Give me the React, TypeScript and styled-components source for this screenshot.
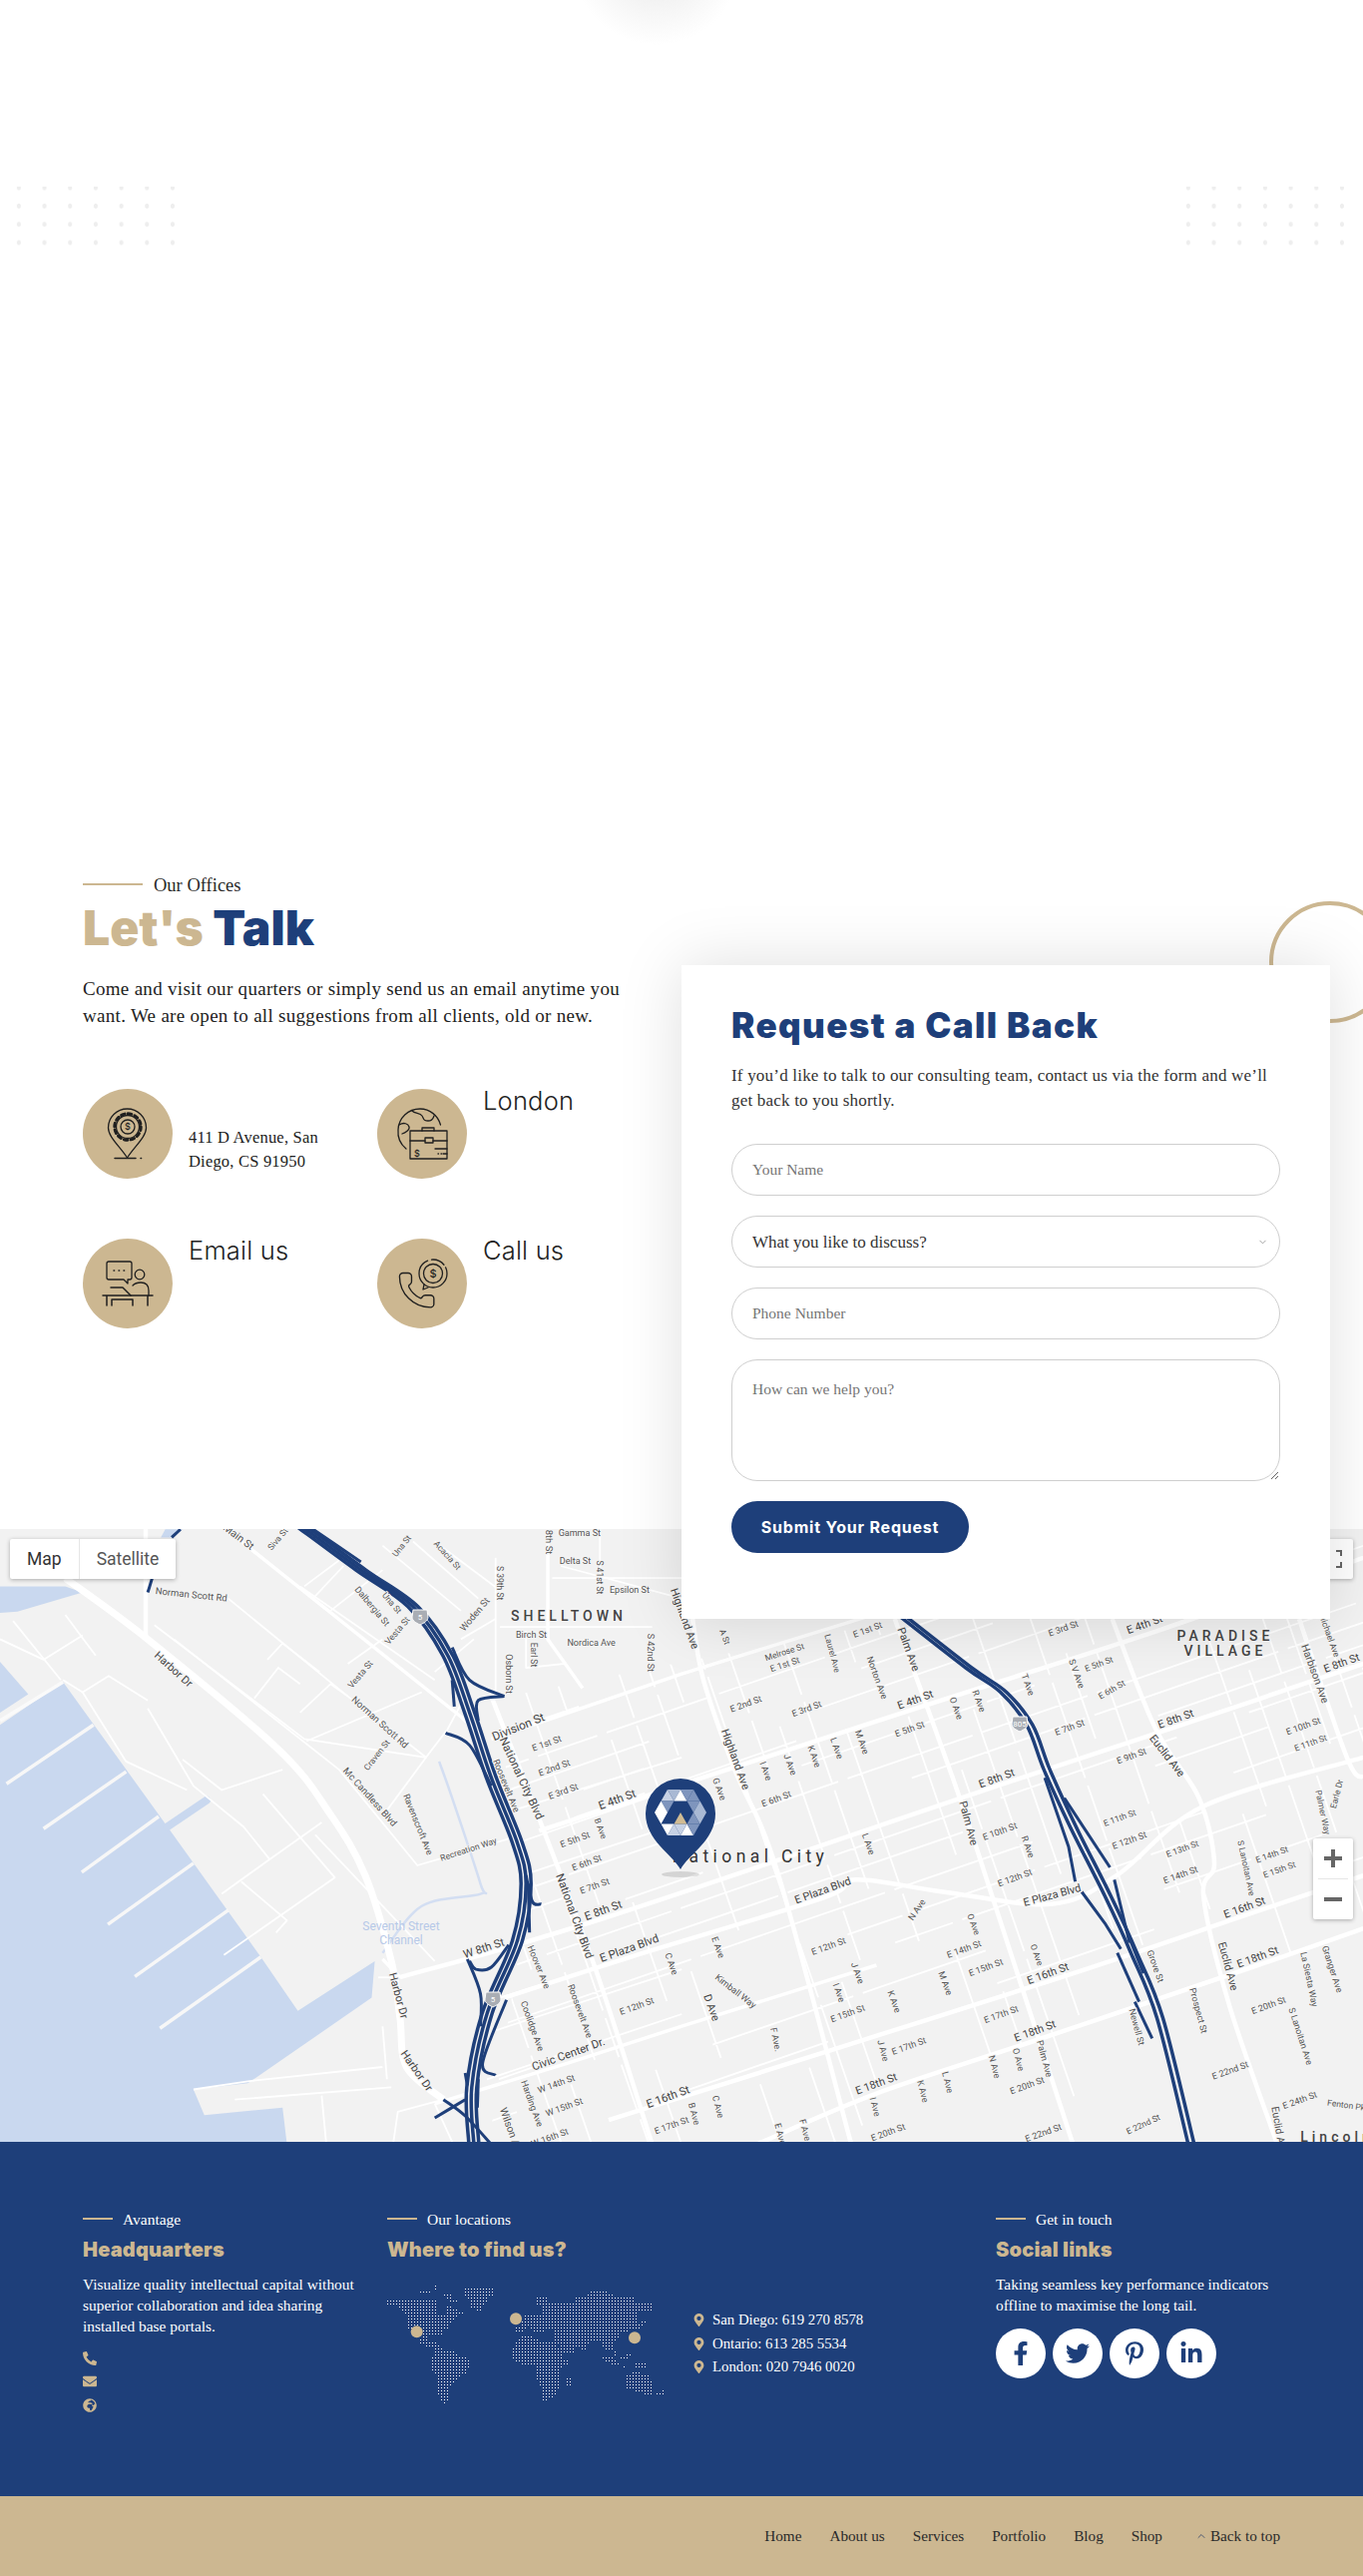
import React from 'react';
import styled, { createGlobalStyle } from 'styled-components';
import { FaFacebookF, FaTwitter, FaPinterestP, FaLinkedinIn, FaPhoneAlt, FaEnvelope, FaGlobeAfrica, FaMapMarkerAlt } from 'react-icons/fa';
import { LuChevronUp, LuChevronDown } from 'react-icons/lu';

const TAN = '#ccb791';
const NAVY = '#1e3f7a';
const SERIF = `"Liberation Serif", "Times New Roman", serif`;
const HEAD = `Inter, "Noto Sans", sans-serif`;

const Global = createGlobalStyle`
  html, body { margin: 0; padding: 0; background: #fff; }
  body { font-family: ${SERIF}; color: #2a2a2a; overflow-x: hidden; }
  * { box-sizing: border-box; }
`;

const Page = styled.div`width: 1366px; overflow: hidden; position: relative;`;

const Hero = styled.div`
  height: 867px; padding: 187px 8px 0 6px; display: flex; justify-content: space-between; align-items: flex-start; position: relative;
`;
const Glow = styled.div`
  position: absolute; left: 573px; top: -125px; width: 170px; height: 170px; border-radius: 50%;
  background: radial-gradient(circle closest-side, #f1f1f1 40%, #f8f8f8 70%, #ffffff 100%);
`;
const Dots = styled.div`
  width: 180px; height: 60px;
  background-image: radial-gradient(ellipse 2.2px 2.8px at center, #eeeeee 85%, transparent 100%);
  background-size: 25.7px 18.3px;
  background-position: 0 -8px;
`;

const Contact = styled.section`display: flex; height: 665px; position: relative;`;
const Ring = styled.div`
  position: absolute; left: 1272px; top: 36px; width: 122px; height: 122px; border-radius: 50%; border: 4px solid ${TAN};
`;
const Offices = styled.div`width: 683px; padding: 10px 0 0 83px;`;
const Eyebrow = styled.div<{ $line: number; $light?: boolean }>`
  display: flex; align-items: center; height: ${p => (p.$light ? 22 : 20)}px; font-size: ${p => (p.$light ? 15.5 : 18.5)}px;
  color: ${p => (p.$light ? '#fff' : '#2a2a2a')};
  &::before { content: ''; width: ${p => p.$line}px; height: 2px; background: ${TAN}; margin-right: ${p => (p.$light ? 10 : 11)}px; margin-top: -2px; }
`;
const BigTitle = styled.h2`
  margin: 8px 0 0; font: 900 48px/50px ${HEAD}; color: ${NAVY};
  span { color: ${TAN}; }
`;
const Lead = styled.p`margin: 22px 0 0; font-size: 19px; letter-spacing: 0.3px; line-height: 27px; width: 550px; color: #222;`;
const InfoGrid = styled.div`
  margin-top: 60px; display: grid; grid-template-columns: 295px 270px; grid-auto-rows: 90px; row-gap: 60px;
`;
const Info = styled.div`display: flex; gap: 16px;`;
const Badge = styled.div`width: 90px; height: 90px; flex: none; border-radius: 50%; background: ${TAN};
  svg { display: block; fill: none; stroke: #1f1f1f; stroke-width: 1.3; stroke-linecap: round; stroke-linejoin: round; }
  text { font: 500 9px Inter, sans-serif; fill: #1f1f1f; stroke: none; text-anchor: middle; }
`;
const InfoTitle = styled.div`font: 300 25.5px/24px ${HEAD}; letter-spacing: 0.2px; color: #222;`;
const Address = styled.div`margin-top: 37px; font-size: 16.5px; letter-spacing: 0.2px; line-height: 24px; width: 150px; color: #222;`;

const Card = styled.div`
  position: relative; z-index: 3; width: 650px; height: 655px; margin: 100px 0 -90px; padding: 40px 50px 0; background: #fff;
  box-shadow: 0 0 60px rgba(0,0,0,.13);
`;
const CardTitle = styled.h3`margin: 0; font: 900 35px/40px ${HEAD}; letter-spacing: 1.4px; color: ${NAVY};`;
const CardText = styled.p`margin: 19px 0 0; font-size: 17px; letter-spacing: 0.2px; line-height: 24.5px; color: #333; width: 545px;`;
const Form = styled.form`margin-top: 31px; display: flex; flex-direction: column; gap: 20px; align-items: flex-start;`;
const fieldCss = `
  width: 550px; border: 1px solid #cfcfcf; background: #fff; font-family: ${SERIF}; font-size: 15.5px; outline: none;
  padding: 0 20px; color: #333;
  &::placeholder { color: #757575; opacity: 1; }
`;
const Input = styled.input`${fieldCss} height: 52px; border-radius: 26px;`;
const SelectWrap = styled.div`position: relative; width: 550px; height: 52px;
  svg { position: absolute; right: 12px; top: 21px; color: #9a9a9a; pointer-events: none; }
`;
const Select = styled.select`${fieldCss} font-size: 17px; height: 52px; border-radius: 26px; appearance: none; -webkit-appearance: none;`;
const TextArea = styled.textarea`${fieldCss} height: 122px; border-radius: 26px; padding-top: 20px; display: block;`;
const Submit = styled.button`
  width: 238px; height: 52px; border: 0; border-radius: 26px; background: ${NAVY}; color: #fff; font: 700 16px ${HEAD}; letter-spacing: 0.8px;
`;

const MapWrap = styled.div`position: relative; height: 614px; background: #f2f2f2; overflow: hidden; z-index: 1;
  > svg.base { display: block; }
`;
const MapTabs = styled.div`position: absolute; left: 10px; top: 10px; height: 40px; display: flex; background: #fff; border-radius: 2px; box-shadow: 0 1px 4px rgba(0,0,0,.3);`;
const MapTab = styled.div<{ $on?: boolean }>`
  font: 400 17.5px/40px Roboto, sans-serif; padding: 0 17px; color: ${p => (p.$on ? '#333' : '#565656')};
  & + & { border-left: 1px solid #e6e6e6; }
`;
const MapButton = styled.div`position: absolute; right: 10px; top: 10px; width: 40px; height: 40px; background: #fff; border-radius: 2px; box-shadow: 0 1px 4px rgba(0,0,0,.3); display: flex; align-items: center; justify-content: center;`;
const Zoom = styled.div`position: absolute; right: 10px; top: 310px; width: 40px; height: 81px; background: #fff; border-radius: 2px; box-shadow: 0 1px 4px rgba(0,0,0,.3);
  display: flex; flex-direction: column; align-items: center; justify-content: space-between; padding: 0 0;
`;
const ZoomBtn = styled.div`height: 40px; width: 100%; display: flex; align-items: center; justify-content: center; font: 0/0 a;`;
const ZoomSep = styled.div`width: 30px; height: 1px; background: #e6e6e6;`;
const Pin = styled.div`position: absolute; left: 647px; top: 250px; width: 70px; height: 100px;`;

const Footer = styled.footer`
  position: relative; z-index: 1; height: 355px; background: ${NAVY}; padding: 67px 0 0 83px; display: flex; color: #fff;
`;
const FCol = styled.div<{ $w: number }>`width: ${p => p.$w}px; flex: none;`;
const FTitle = styled.h4`margin: 7px 0 0; font: 900 20px/24px ${HEAD}; letter-spacing: 0.2px; color: ${TAN};`;
const FText = styled.p`margin: 12px 0 0; font-size: 15.4px; line-height: 21px; color: #fff; width: 285px;`;
const ContactIcons = styled.div`margin-top: 10px; display: flex; flex-direction: column; color: ${TAN}; font-size: 14px;
  span { height: 23.5px; display: flex; align-items: center; }
`;
const FindRow = styled.div`display: flex; margin-top: 24px;`;
const Places = styled.ul`list-style: none; margin: 23px 0 0 27px; padding: 0;`;
const Place = styled.li`display: flex; align-items: center; height: 23.5px; font-size: 14.8px; gap: 8px;
  svg { color: ${TAN}; font-size: 13px; width: 11px; }
`;
const Socials = styled.div`display: flex; gap: 7px; margin-top: 13px;`;
const Social = styled.a`width: 50px; height: 50px; border-radius: 50%; background: #fff; color: ${NAVY}; display: flex; align-items: center; justify-content: center; font-size: 24px;`;

const Bar = styled.nav`
  height: 80px; background: ${TAN}; display: flex; justify-content: flex-end; align-items: center; padding-right: 83px; position: relative; z-index: 1;
`;
const BarLink = styled.a<{ $gap?: number }>`
  font-size: 15.2px; color: #2a2a2a; margin-left: ${p => p.$gap ?? 28}px; display: flex; align-items: center; gap: 3px;
  svg { color: #4e5a73; }
`;

/* ---------- drawings ---------- */
const RingTeeth = () => <circle cx="45" cy="38" r="13.2" strokeWidth="3" strokeDasharray="3.6 3.3" />;
const IconPin = () => (
  <svg width="90" height="90" viewBox="0 0 90 90">
    <path d="M44.5 20a19 19 0 0 1 19 19c0 9-11 18-19 30c-8-12-19-21-19-30a19 19 0 0 1 19-19z" />
    <RingTeeth />
    <circle cx="45" cy="38" r="11.5" />
    <circle cx="45" cy="38" r="7" />
    <text x="45" y="41.3">$</text>
    <path d="M32 69.5H53M58 69.5h.6" strokeWidth="1.5" />
  </svg>
);
const IconGlobe = () => (
  <svg width="90" height="90" viewBox="0 0 90 90">
    <path d="M29 60a22 22 0 0 1-8-19c.5-12 10-21 22-21c10 0 18 7 20.500 16" />
    <path d="M35 22c3 3 8 2 10 5s1 5 6 5s5-3 6-5" />
    <path d="M22 36c5-3 9-1 10 2s-4 6-7 7" />
    <rect x="33" y="42" width="37" height="28" />
    <path d="M45 42v-3h12v3M33 52h15M56 52h14" />
    <rect x="48" y="49" width="8" height="5" />
    <path d="M58 60H70M61 65h.5M64 65h.5M66 65h4" />
    <text x="40" y="68">$</text>
  </svg>
);
const IconDesk = () => (
  <svg width="90" height="90" viewBox="0 0 90 90">
    <path d="M26 23h21a2 2 0 0 1 2 2v14a2 2 0 0 1-2 2h-2v4l-4-4H26a2 2 0 0 1-2-2V25a2 2 0 0 1 2-2z" />
    <path d="M31 32h.6M36 32h.6M41 32h.6" strokeWidth="1.5" />
    <circle cx="57" cy="36" r="4.800" />
    <path d="M50 47c2-2 4-3 8-3c5 0 8 3 8 8v5" />
    <path d="M28 49h12l8 8" strokeWidth="1.5" />
    <path d="M20 57H70M24 57v10M65 57v10M29 67v-6h21v6" strokeWidth="1.5" />
  </svg>
);
const IconCall = () => (
  <svg width="90" height="90" viewBox="0 0 90 90">
    <circle cx="56" cy="35" r="14" strokeDasharray="60 4 14 3" />
    <circle cx="56" cy="35" r="9.500" />
    <text x="56" y="38.500" style={{ fontSize: 11 }}>$</text>
    <path d="M47 46l-1 5l5-2" />
    <g transform="translate(19,31) scale(1.72)" strokeWidth=".8">
      <path d="M13.832 16.568a1 1 0 0 0 1.213-.303l.355-.465A2 2 0 0 1 17 15h3a2 2 0 0 1 2 2v3a2 2 0 0 1-2 2A18 18 0 0 1 2 4a2 2 0 0 1 2-2h3a2 2 0 0 1 2 2v3a2 2 0 0 1-.8 1.6l-.468.351a1 1 0 0 0-.292 1.233 14 14 0 0 0 6.392 6.384" />
    </g>
  </svg>
);

/* map: coordinates were read off a 2.295 x 2.45 enlargement */
type P = [number, number];
const mx = (x: number) => x / 2.295;
const my = (y: number) => y / 2.45 - 12;
const line = (pts: P[], off = 0) => 'M' + pts.map(([x, y]) => `${mx(x + off).toFixed(1)} ${my(y).toFixed(1)}`).join('L');
const smooth = (pts: P[], dx = 0, dy = 0) => {
  const p = pts.map(([x, y]) => [mx(x) + dx, my(y) + dy]);
  let d = `M${p[0][0].toFixed(1)} ${p[0][1].toFixed(1)}`;
  for (let i = 0; i < p.length - 1; i++) {
    const a = p[Math.max(0, i - 1)], b = p[i], c = p[i + 1], e = p[Math.min(p.length - 1, i + 2)];
    d += `C${(b[0] + (c[0] - a[0]) / 6).toFixed(1)} ${(b[1] + (c[1] - a[1]) / 6).toFixed(1)} ${(c[0] - (e[0] - b[0]) / 6).toFixed(1)} ${(c[1] - (e[1] - b[1]) / 6).toFixed(1)} ${c[0].toFixed(1)} ${c[1].toFixed(1)}`;
  }
  return d;
};

const WATER: P[][] = [
  [[0, 510], [145, 405], [385, 760], [600, 1080], [685, 1212], [862, 1090], [855, 1180], [570, 1390], [445, 1405], [470, 1468], [650, 1450], [660, 1540], [0, 1540]],
  [[0, 355], [65, 435], [0, 480]],
  [[0, 170], [150, 170], [190, 185], [40, 232], [0, 235]],
  [[380, 30], [420, 30], [400, 50], [370, 50]],
];
const PIERS: P[][] = [
  [[15, 655], [215, 510]], [[100, 765], [290, 625]], [[188, 872], [365, 735]], [[248, 1000], [445, 850]], [[310, 1128], [525, 965]], [[368, 1255], [600, 1080]], [[0, 500], [145, 405]],
];
const BIG: P[][] = [
  [[150, 150], [340, 300], [640, 570], [760, 730], [840, 880], [900, 1090], [920, 1230], [935, 1350], [1020, 1430]],
  [[335, 30], [335, 300]],
  [[1240, 770], [2106, 470], [2660, 280], [3136, 100]],
  [[920, 1130], [1388, 985], [2293, 660], [2705, 515], [3136, 360]],
  [[1160, 1180], [1450, 1080], [1893, 935], [1968, 890], [2168, 920], [2418, 950], [2568, 880], [2768, 710], [3136, 590]],
  [[1400, 1480], [2411, 1140], [2863, 978], [3136, 880]],
  [[1740, 1540], [2016, 1415], [2381, 1285], [2893, 1100], [3136, 1010]],
  [[1130, 440], [1240, 740], [1370, 1110], [1500, 1540]],
  [[1593, 250], [1618, 400], [1690, 620], [1788, 870], [1958, 1540]],
  [[2058, 250], [2198, 660], [2288, 950], [2468, 1540]],
  [[2558, 250], [2658, 520], [2758, 690], [2793, 850], [2768, 930], [2828, 1200], [2938, 1540]],
  [[2988, 250], [3098, 590], [3136, 640]],
];
const MID: P[][] = [
  [[520, 30], [1060, 490], [1110, 540]],
  [[1130, 545], [1568, 385], [2068, 220]],
  [[1000, 1440], [1308, 1340], [1568, 1250], [2016, 1100]],
  [[1260, 30], [1260, 300], [1340, 420]],
  [[880, 1085], [920, 1130]],
];
const THIN: P[][] = [
  [[30, 255], [140, 400]], [[150, 240], [220, 340]], [[0, 300], [100, 350], [190, 290]], [[190, 430], [250, 390], [340, 450]],
  [[145, 400], [190, 430], [290, 600], [430, 670]], [[340, 470], [445, 660], [560, 760], [620, 840], [510, 925]],
  [[420, 595], [510, 670], [650, 620]], [[620, 840], [740, 750]], [[555, 895], [660, 990], [635, 1020]],
  [[605, 680], [770, 885], [515, 1075]], [[725, 780], [1000, 1090]], [[355, 265], [700, 545], [980, 590]],
  [[525, 200], [800, 440], [980, 590], [1030, 520], [1070, 440]], [[400, 300], [780, 620], [960, 855], [1170, 790]],
  [[615, 350], [650, 310], [735, 380]], [[585, 445], [640, 370], [690, 410]], [[690, 480], [760, 410], [800, 440]],
  [[705, 550], [970, 430]], [[980, 590], [890, 720]], [[700, 170], [800, 90], [830, 130]], [[720, 200], [790, 120]],
  [[760, 230], [880, 130]], [[690, 170], [1000, 400]], [[800, 360], [880, 300]], [[1140, 100], [1140, 430]], [[1380, 30], [1380, 190]],
  [[1150, 270], [1500, 270]], [[1290, 120], [1568, 200]], [[1000, 60], [1150, 180]], [[950, 60], [1100, 200]], [[880, 70], [1060, 230]],
  [[1270, 150], [1568, 150]], [[1210, 280], [1210, 370], [1300, 360]], [[1060, 300], [1140, 250]], [[1000, 380], [1090, 300]],
  [[540, 1430], [900, 1400]], [[905, 1534], [915, 1460], [1020, 1430]], [[740, 1420], [750, 1534]], [[870, 1130], [930, 1130]],
  [[445, 1405], [570, 1385], [880, 1350]], [[880, 1250], [890, 1380]],
  [[1000, 1440], [1040, 1534]], [[1150, 1180], [1568, 1040]], [[1140, 1260], [1568, 1110]], [[1120, 1380], [1568, 1220]],
  [[1180, 720], [1568, 590]], [[1190, 800], [1568, 660]], [[1200, 880], [1568, 750]],
];
const VEIN: P[] = [[1010, 600], [1040, 690], [1105, 900], [1105, 925], [970, 955], [880, 1070]];

const I5: P[] = [[690, 20], [830, 130], [950, 220], [1030, 340], [1080, 480], [1130, 640], [1190, 800], [1210, 900], [1190, 1040], [1120, 1220], [1085, 1400], [1090, 1540]];
const I5R: P[][] = [
  [[1040, 320], [1080, 400], [1160, 440]], [[1100, 500], [1100, 450], [1160, 440]], [[1040, 400], [1045, 465]],
  [[1025, 530], [1080, 560], [1130, 660]], [[1210, 880], [1225, 945], [1245, 950]], [[1215, 900], [1218, 1020]],
  [[1075, 1085], [1105, 1170], [1105, 1250]], [[1080, 1090], [1095, 1110], [1130, 1105], [1170, 1050]],
  [[1165, 1185], [1110, 1340], [1140, 1370]], [[1020, 1430], [1070, 1470], [1130, 1540]], [[1000, 1475], [1070, 1430]],
  [[1100, 1380], [1098, 1450]], [[1070, 1365], [1075, 1395]], [[720, 30], [830, 110]],
  [[340, 185], [350, 150]], [[395, 50], [415, 30]],
];
const I805: P[] = [[2060, 230], [2228, 370], [2308, 430], [2368, 510], [2408, 620], [2468, 760], [2548, 930], [2608, 1070], [2668, 1230], [2740, 1540]];
const I805R: P[][] = [
  [[2403, 640], [2458, 810], [2473, 895]], [[2448, 690], [2553, 860]], [[2488, 920], [2543, 1000], [2578, 1060]], [[2563, 890], [2598, 1045]],
  [[2600, 1040], [2630, 1120]], [[2570, 1070], [2620, 1190]], [[2610, 1190], [2650, 1280]],
];

type L = [string, number, number, number, number, number?];
const LABELS: L[] = [
  ['Main St', 548, 50, 37, 11], ['Siva St', 640, 55, -50, 9], ['Una St', 925, 72, -52, 9], ['Acacia St', 1028, 95, 48, 9],
  ['S 38th St', 1262, 45, 90, 10], ['Gamma St', 1333, 40, 0, 9.500], ['Delta St', 1323, 110, 0, 9.500], ['S 41st St', 1378, 148, 90, 9],
  ['S 39th St', 1148, 162, 90, 9], ['Epsilon St', 1448, 180, 0, 9.500], ['Norman Scott Rd', 440, 192, 6, 10], ['Dalbergia St', 855, 220, 50, 9.500],
  ['Una St', 900, 212, 50, 9], ['Vesta St', 915, 280, -50, 9.500], ['Woden St', 1093, 240, -50, 10], ['Birch St', 1222, 290, 0, 9.500],
  ['Earl St', 1225, 338, 90, 9], ['Nordica Ave', 1360, 311, 0, 9.500], ['S 42nd St', 1495, 333, 90, 9.500], ['Osborn St', 1168, 385, 90, 9.500],
  ['Harbor Dr', 398, 375, 42, 11.500], ['Vesta St', 830, 387, -50, 9.500], ['Norman Scott Rd', 873, 505, 42, 10], ['Division St', 1193, 517, -22, 12.500],
  ['E 1st St', 1258, 557, -20, 9.500], ['E 2nd St', 1275, 617, -20, 9.500], ['E 3rd St', 1296, 675, -20, 9.500], ['National City Blvd', 1198, 642, 65, 12],
  ['Roosevelt Ave', 1163, 660, 68, 9.500], ['Craven St', 868, 585, -52, 9], ['Mc Candless Blvd', 850, 688, 48, 10], ['Ravenscroft Ave', 960, 755, 68, 9.500],
  ['Recreation Way', 1078, 817, -18, 9], ['E 4th St', 1420, 695, -20, 12], ['B Ave', 1380, 765, 70, 9], ['E 5th St', 1323, 793, -20, 9.500],
  ['E 6th St', 1350, 850, -20, 9.500], ['E 7th St', 1368, 907, -20, 9.500], ['E 8th St', 1388, 967, -20, 12], ['National City Blvd', 1320, 980, 70, 12],
  ['W 8th St', 1113, 1060, -18, 12], ['Hoover Ave', 1238, 1105, 68, 9.500], ['E Plaza Blvd', 1448, 1060, -20, 12], ['C Ave', 1543, 1097, 70, 9.500],
  ['Harbor Dr', 915, 1175, 75, 11.500], ['Roosevelt Ave', 1333, 1213, 70, 9.500], ['Coolidge Ave', 1223, 1250, 70, 9.500], ['E 12th St', 1465, 1202, -20, 9.500],
  ['Civic Center Dr.', 1308, 1320, -20, 12], ['Harbor Dr', 957, 1360, 55, 11.500], ['W 14th St', 1280, 1393, -20, 9.500], ['Harding Ave', 1222, 1440, 70, 9.500],
  ['W 15th St', 1298, 1450, -20, 9.500], ['Wilson Ave', 1175, 1510, 70, 11], ['W 16th St', 1265, 1525, -20, 9.500], ['E 16th St', 1537, 1425, -20, 12], ['E 17th St', 1545, 1495, -20, 9.500],
];
const LABELS4: L[] = [
  ['Highland Ave', 5, 250, 70, 11.500], ['A St', 98, 295, 70, 9], ['Melrose St', 237, 333, -18, 9], ['E 1st St', 238, 363, -18, 9.500], ['E 1st St', 428, 278, -20, 9.500],
  ['Laurel Ave', 345, 335, 75, 9], ['Norton Ave', 448, 395, 70, 9.500], ['Palm Ave', 520, 325, 70, 11.500], ['E 3rd St', 878, 275, -20, 9.500], ['E 4th St', 1065, 265, -20, 11.500],
  ['Harbison Ave', 1455, 385, 70, 11], ['Michael Ave', 1488, 290, 70, 9], ['E 8th St', 1518, 360, -20, 11.500], ['E 2nd St', 148, 460, -20, 9.500], ['E 3rd St', 288, 472, -20, 9.500],
  ['E 4th St', 538, 450, -20, 11.500], ['E 5th St', 525, 522, -20, 9.500], ['R Ave', 682, 452, 70, 9.500], ['O Ave', 630, 470, 70, 9.500], ['T Ave', 795, 412, 70, 9.500],
  ['S V Ave', 907, 385, 70, 9.500], ['E 5th St', 960, 362, -20, 9], ['E 6th St', 990, 425, -30, 9], ['E 7th St', 893, 518, -20, 9.500], ['E 8th St', 1137, 497, -20, 11.500],
  ['Euclid Ave', 1115, 587, 52, 11.500], ['E 9th St', 1035, 588, -20, 9.500], ['E 10th St', 1430, 515, -20, 9.500], ['E 11th St', 1447, 556, -20, 9], ['Highland Ave', 122, 595, 70, 11.500],
  ['M Ave', 413, 553, 70, 9.500], ['L Ave', 355, 568, 70, 9.500], ['K Ave', 303, 588, 70, 9.500], ['J Ave', 248, 608, 70, 9.500], ['I Ave', 192, 624, 70, 9.500], ['G Ave', 85, 668, 70, 9.500],
  ['E 6th St', 218, 693, -20, 9.500], ['E 8th St', 725, 643, -20, 11.500], ['Palm Ave', 658, 752, 75, 11.500], ['E 10th St', 732, 773, -20, 9.500], ['R Ave', 795, 810, 70, 9.500], ['L Ave', 428, 803, 70, 9.500],
  ['E 11th St', 1008, 740, -20, 9], ['E 12th St', 1030, 795, -20, 9.500], ['E 13th St', 1152, 816, -20, 9], ['E 14th St', 1148, 880, -20, 9.500], ['E 14th St', 1358, 830, -20, 9], ['E 15th St', 1375, 867, -20, 9],
  ['S Lanoitan Ave', 1297, 862, 78, 9], ['Palmer Way', 1473, 725, 78, 9], ['Earle Dr', 1508, 680, -75, 9], ['E Plaza Blvd', 325, 918, -20, 11.500], ['E Plaza Blvd', 852, 930, -15, 11.500], ['E 12th St', 767, 887, -20, 9.500],
  ['N Ave', 542, 965, -55, 9.500], ['O Ave', 670, 1000, 70, 9], ['E Ave', 82, 1057, 70, 9.500], ['E 12th St', 338, 1055, -20, 9.500], ['E 14th St', 650, 1062, -20, 9.500], ['E 15th St', 700, 1107, -20, 9.500],
  ['O Ave', 815, 1075, 70, 9], ['E 16th St', 843, 1122, -20, 11.500], ['E 16th St', 1295, 960, -20, 11.500], ['Grove St', 1088, 1103, 70, 9.500], ['Euclid Ave', 1255, 1103, 75, 11.500], ['E 18th St', 1325, 1082, -20, 11.500],
  ['Granger Ave', 1495, 1110, 72, 9.500], ['La Siesta Way', 1442, 1135, 78, 9.500], ['J Ave', 403, 1120, 70, 9.500], ['I Ave', 360, 1168, 70, 9.500], ['M Ave', 605, 1145, 70, 9.500], ['K Ave', 487, 1190, 70, 9.500],
  ['Kimball Way', 123, 1165, 38, 9.500], ['D Ave', 67, 1205, 70, 11.500], ['E 15th St', 382, 1220, -20, 9.500], ['E 17th St', 735, 1222, -20, 9.500], ['E 20th St', 1350, 1200, -20, 9.500], ['S Lanoitan Ave', 1422, 1275, 72, 9.500],
  ['Prospect St', 1187, 1212, 75, 9.500], ['Newell St', 1045, 1252, 75, 9.500], ['F Ave.', 215, 1283, 78, 9.500], ['E 18th St', 813, 1263, -20, 11.500], ['Palm Ave', 833, 1330, 75, 9.500], ['J Ave', 462, 1310, 75, 9.500],
  ['E 17th St', 523, 1300, -20, 9.500], ['L Ave', 610, 1388, 75, 9.500], ['N Ave', 718, 1350, 75, 9.500], ['O Ave', 773, 1332, 75, 9.500], ['E 20th St', 795, 1397, -20, 9.500], ['E 18th St', 448, 1393, -20, 11.500],
  ['K Ave', 553, 1410, 75, 9.500], ['E 22nd St', 1262, 1360, -20, 9.500], ['E 24th St', 1422, 1433, -20, 9.500], ['Fenton Pkwy', 1540, 1447, 8, 9], ['C Ave', 82, 1448, 75, 9.500], ['B Ave', 27, 1465, 75, 9.500],
  ['I Ave', 443, 1448, 75, 9.500], ['F Ave', 282, 1505, 75, 9.500], ['E Ave', 225, 1515, 75, 9.500], ['E 20th St', 475, 1512, -20, 9.500], ['E 22nd St', 832, 1513, -20, 9.500], ['E 22nd St', 1062, 1492, -25, 9], ['Euclid Ave', 1372, 1505, 80, 11],
];

const minorStreets = () => {
  let s = 7;
  const r = () => (s = (s * 16807) % 2147483647) / 2147483647;
  const a = (-19 * Math.PI) / 180;
  const e1: P = [Math.cos(a), Math.sin(a)];
  const e2: P = [-Math.sin(a), Math.cos(a)];
  const O: P = [500, 520];
  let d = '';
  const seg = (u0: number, v0: number, u1: number, v1: number) => {
    const f = (u: number, v: number) => `${(O[0] + u * e1[0] + v * e2[0]).toFixed(1)} ${(O[1] + u * e1[1] + v * e2[1]).toFixed(1)}`;
    d += `M${f(u0, v0)}L${f(u1, v1)}`;
  };
  for (let u = -60; u < 960; u += 22 + r() * 12) {
    for (let v = -640; v < 120;) {
      const len = 40 + r() * 130;
      if (r() < 0.62) seg(u, v, u, v + len);
      v += len + 8;
    }
  }
  for (let v = -640; v < 120; v += 20 + r() * 18) {
    for (let u = -60; u < 960;) {
      const len = 50 + r() * 160;
      if (r() < 0.62) seg(u, v, u + len, v);
      u += len + 10;
    }
  }
  return d;
};

const Shield = ({ x, y, t }: { x: number; y: number; t: string }) => (
  <g transform={`translate(${x},${y})`}>
    <path d="M-7-7h14l1 7c0 4-4 6-8 8c-4-2-8-4-8-8z" fill="#a9adb4" stroke="#fff" strokeWidth="1" />
    <text x="0" y="2.500" textAnchor="middle" fontFamily="Roboto, sans-serif" fontSize="8" fill="#fff">{t}</text>
  </g>
);

const MapLabel = ({ l, off }: { l: L; off: number }) => (
  <text
    transform={`translate(${mx(l[1] + off).toFixed(1)},${my(l[2]).toFixed(1)}) rotate(${l[3]})`}
    textAnchor="middle" dominantBaseline="middle" fontFamily="Roboto, sans-serif" fontSize={l[4] * 0.95}
    fill={l[4] > 11 ? '#444' : '#555'} stroke="#f4f4f4" strokeWidth="2" paintOrder="stroke"
  >{l[0]}</text>
);
const Area = ({ x, y, t }: { x: number; y: number; t: string }) => (
  <text x={x} y={y} textAnchor="middle" fontFamily="Roboto, sans-serif" fontWeight="500" fontSize="14" letterSpacing="4" fill="#444" stroke="#f4f4f4" strokeWidth="2" paintOrder="stroke">{t}</text>
);

const CityMap = () => {
  const minor = React.useMemo(minorStreets, []);
  return (
    <svg className="base" width="1366" height="614" viewBox="0 0 1366 614">
      <defs>
        <clipPath id="grid-land"><path d="M497 170L1366 0V614H490L527 380z" /></clipPath>
      </defs>
      <rect width="1366" height="614" fill="#f2f2f2" />
      {WATER.map((w, i) => <path key={i} d={line(w) + 'Z'} fill="#c9d8ef" />)}
      <path d={line([[385, 760], [475, 695]])} stroke="#c9d8ef" strokeWidth="8" strokeLinecap="round" fill="none" />
      <path d={smooth(VEIN)} stroke="#d3def2" strokeWidth="2.500" fill="none" />
      <g fill="none" stroke="#fff" strokeLinecap="butt" strokeLinejoin="round">
        {PIERS.map((p, i) => <path key={i} d={line(p)} strokeWidth="3.500" stroke={i === 6 ? '#fafafa' : '#f7f7f7'} />)}
        <path d={minor} clipPath="url(#grid-land)" strokeWidth="1.800" />
        {THIN.map((p, i) => <path key={i} d={line(p)} strokeWidth="1.800" />)}
        {MID.map((p, i) => <path key={i} d={line(p)} strokeWidth="3.500" />)}
        {BIG.map((p, i) => <path key={i} d={smooth(p)} strokeWidth={i === 0 ? 7 : 4.500} />)}
      </g>
      <g fill="none" stroke="#1e3f7a" strokeLinejoin="round">
        <path d={smooth(I5, -5, 0)} strokeWidth="3.500" />
        <path d={smooth(I5, 0, 0)} strokeWidth="3.500" />
        <path d={smooth(I5, 5, 0)} strokeWidth="3.500" />
        {I5R.map((p, i) => <path key={i} d={smooth(p)} strokeWidth="3" />)}
        <path d={smooth(I805, -3, 0)} strokeWidth="3.500" />
        <path d={smooth(I805, 3, 0)} strokeWidth="3.500" />
        {I805R.map((p, i) => <path key={i} d={line(p, 0)} strokeWidth="3" />)}
      </g>
      <Shield x={421} y={88} t="5" />
      <Shield x={494} y={471} t="5" />
      <Shield x={1022} y={195} t="805" />
      <g>
        {LABELS.map((l, i) => <MapLabel key={i} l={l} off={0} />)}
        {LABELS4.map((l, i) => <MapLabel key={i} l={l} off={1568} />)}
      </g>
      <g fontFamily="Roboto, sans-serif" fontSize="12" fill="#b7c9e8" textAnchor="middle">
        <text x="402" y="402">Seventh Street</text>
        <text x="402" y="416">Channel</text>
      </g>
      <Area x={570} y={92} t="SHELLTOWN" />
      <Area x={1228} y={112} t="PARADISE" />
      <Area x={1228} y={127} t="VILLAGE" />
      <Area x={1340} y={614} t="Lincoln" />
      <text x="752" y="334" textAnchor="middle" fontFamily="Roboto, sans-serif" fontSize="17.500" letterSpacing="4.400" fill="#333" stroke="#f4f4f4" strokeWidth="2" paintOrder="stroke">National City</text>
    </svg>
  );
};

const tri = (c: string, ...p: number[]) => ({ c, pts: p.map((v, i) => (i % 2 ? v * 11.5 - 23 + 34 : v * 6.5 + 35)).join(' ') });
const W = '#ffffff', Lt = '#c6d1e4', Md = '#7f95bd', Sf = '#a9b9d4';
const LOGO = [
  tri(Lt, -2, 0, -3, 1, -1, 1), tri(Sf, -2, 0, 0, 0, -1, 1), tri(W, 0, 0, -1, 1, 1, 1), tri(Md, 0, 0, 2, 0, 1, 1), tri(Md, 2, 0, 1, 1, 3, 1),
  tri(Md, -3, 1, -1, 1, -2, 2), tri(W, -3, 1, -4, 2, -2, 2), tri(Md, 1, 1, 3, 1, 2, 2), tri(Sf, 3, 1, 2, 2, 4, 2),
  tri(W, -4, 2, -2, 2, -3, 3), tri(Sf, 2, 2, 4, 2, 3, 3), tri(Md, 2, 2, 1, 3, 3, 3),
  tri(W, -3, 3, -1, 3, -2, 4), tri(Lt, -1, 3, -2, 4, 0, 4), tri(W, 1, 3, 0, 4, 2, 4), tri(Md, 1, 3, 3, 3, 2, 4), tri(Lt, -1, 3, 1, 3, 0, 4),
  tri('#d0bb93', 0, 2, -1, 3, 1, 3),
];
const MapPin = () => (
  <svg width="70" height="100" viewBox="0 0 70 100">
    <ellipse cx="35" cy="96" rx="19" ry="3" fill="#000" opacity=".12" />
    <path d="M35 91C27 76 0 62 0 35a35 35 0 0 1 70 0C70 62 43 76 35 91z" fill={NAVY} />
    {LOGO.map((t, i) => <polygon key={i} points={t.pts} fill={t.c} />)}
  </svg>
);

/* world map: rows of dot runs on a 3px lattice, read off a 3x crop */
const WORLD: [number, [number, number][]][] = [
  [60, [[202, 202]]], [69, [[202, 202], [292, 365]]], [78, [[157, 184], [292, 365], [670, 715]]], [87, [[229, 247], [292, 365], [660, 725]]],
  [96, [[238, 247], [301, 355], [508, 535], [625, 790]]], [105, [[57, 202], [247, 265], [310, 355], [500, 535], [625, 790]]],
  [114, [[57, 202], [310, 345], [500, 510], [520, 843]]], [123, [[93, 202], [238, 247], [310, 337], [520, 843]]], [132, [[102, 202], [238, 265], [320, 330], [520, 843]]],
  [141, [[112, 200], [238, 275], [520, 800]]], [150, [[120, 265], [470, 800]]], [159, [[120, 255], [470, 800]]], [168, [[120, 245], [460, 800], [820, 825]]],
  [177, [[120, 235], [460, 800], [805, 815]]], [186, [[120, 230], [445, 465], [490, 790], [800, 810]]], [195, [[155, 220], [445, 455], [498, 520], [560, 770]]],
  [204, [[160, 220], [560, 750]]], [213, [[160, 175], [460, 490], [560, 745]]], [222, [[155, 175], [450, 500], [560, 690], [700, 735]]],
  [231, [[155, 195], [445, 555], [570, 660], [700, 725]]], [240, [[175, 210], [445, 555], [580, 650], [705, 725]]], [249, [[195, 215], [435, 565], [580, 610], [640, 645], [715, 725]]],
  [258, [[200, 255], [435, 565], [580, 610], [742, 742]]], [267, [[200, 265], [435, 575], [742, 742], [770, 780]]], [276, [[192, 285], [435, 580], [705, 725], [760, 770]]],
  [285, [[192, 295], [445, 590], [715, 735]]], [294, [[192, 295], [455, 590], [725, 745], [805, 830]]], [303, [[192, 295], [500, 580], [768, 768], [805, 825]]],
  [312, [[192, 285], [500, 570]]], [321, [[200, 285], [500, 570], [795, 810]]], [330, [[210, 270], [500, 565], [778, 835]]], [339, [[210, 265], [500, 565], [590, 600], [778, 840]]],
  [348, [[210, 255], [510, 565], [590, 600], [770, 850]]], [357, [[210, 245], [510, 565], [590, 600], [770, 850]]], [366, [[210, 235], [518, 565], [778, 850]]],
  [375, [[210, 230], [518, 555], [805, 850], [878, 885]]], [384, [[210, 230], [518, 555], [825, 850], [868, 885]]], [393, [[218, 230], [518, 545]]], [402, [[218, 230], [525, 535]]], [411, [[228, 228]]],
];
const worldPath = () => {
  let d = '';
  for (const [y, runs] of WORLD) {
    for (const [a, b] of runs) {
      const start = Math.round(a / 9) * 3;
      const end = Math.round(b / 9) * 3;
      for (let x = start; x <= end; x += 3) d += `M${x - 18} ${y / 3 - 20}h1v1h-1z`;
    }
  }
  return d;
};
const WorldMap = () => (
  <svg width="280" height="120" viewBox="0 0 280 120" style={{ flex: 'none', display: 'block' }}>
    <path d={React.useMemo(worldPath, [])} fill="#fff" shapeRendering="crispEdges" />
    <circle cx="29.700" cy="46.300" r="6" fill={TAN} />
    <circle cx="129" cy="33.300" r="6" fill={TAN} />
    <circle cx="248" cy="52.300" r="6" fill={TAN} />
  </svg>
);

export default function App() {
  return (
    <Page>
      <Global />
      <Hero>
        <Glow />
        <Dots />
        <Dots />
      </Hero>
      <Contact>
        <Ring />
        <Offices>
          <Eyebrow $line={60}>Our Offices</Eyebrow>
          <BigTitle><span>Let's</span> Talk</BigTitle>
          <Lead>Come and visit our quarters or simply send us an email anytime you want. We are open to all suggestions from all clients, old or new.</Lead>
          <InfoGrid>
            <Info>
              <Badge><IconPin /></Badge>
              <Address>411 D Avenue, San Diego, CS 91950</Address>
            </Info>
            <Info>
              <Badge><IconGlobe /></Badge>
              <InfoTitle>London</InfoTitle>
            </Info>
            <Info>
              <Badge><IconDesk /></Badge>
              <InfoTitle>Email us</InfoTitle>
            </Info>
            <Info>
              <Badge><IconCall /></Badge>
              <InfoTitle>Call us</InfoTitle>
            </Info>
          </InfoGrid>
        </Offices>
        <Card>
          <CardTitle>Request a Call Back</CardTitle>
          <CardText>If you’d like to talk to our consulting team, contact us via the form and we’ll get back to you shortly.</CardText>
          <Form>
            <Input placeholder="Your Name" />
            <SelectWrap>
              <Select defaultValue="a"><option value="a">What you like to discuss?</option></Select>
              <LuChevronDown size={11} />
            </SelectWrap>
            <Input placeholder="Phone Number" />
            <TextArea placeholder="How can we help you?" />
            <Submit type="button">Submit Your Request</Submit>
          </Form>
        </Card>
      </Contact>
      <MapWrap>
        <CityMap />
        <MapTabs>
          <MapTab $on>Map</MapTab>
          <MapTab>Satellite</MapTab>
        </MapTabs>
        <MapButton>
          <svg width="18" height="18" viewBox="0 0 18 18" fill="none" stroke="#666" strokeWidth="2"><path d="M1 6V1h5M12 1h5v5M17 12v5h-5M6 17H1v-5" /></svg>
        </MapButton>
        <Zoom>
          <ZoomBtn><svg width="18" height="18" viewBox="0 0 18 18"><path d="M7 0h4v7h7v4h-7v7H7v-7H0V7h7z" fill="#666" /></svg></ZoomBtn>
          <ZoomSep />
          <ZoomBtn><svg width="18" height="18" viewBox="0 0 18 18"><path d="M0 7h18v4H0z" fill="#666" /></svg></ZoomBtn>
        </Zoom>
        <Pin><MapPin /></Pin>
      </MapWrap>
      <Footer>
        <FCol $w={305}>
          <Eyebrow $line={30} $light>Avantage</Eyebrow>
          <FTitle>Headquarters</FTitle>
          <FText>Visualize quality intellectual capital without superior collaboration and idea sharing installed base portals.</FText>
          <ContactIcons>
            <span><FaPhoneAlt /></span>
            <span><FaEnvelope /></span>
            <span><FaGlobeAfrica /></span>
          </ContactIcons>
        </FCol>
        <FCol $w={610}>
          <Eyebrow $line={30} $light>Our locations</Eyebrow>
          <FTitle>Where to find us?</FTitle>
          <FindRow>
            <WorldMap />
            <Places>
              <Place><FaMapMarkerAlt />San Diego: 619 270 8578</Place>
              <Place><FaMapMarkerAlt />Ontario: 613 285 5534</Place>
              <Place><FaMapMarkerAlt />London: 020 7946 0020</Place>
            </Places>
          </FindRow>
        </FCol>
        <FCol $w={300}>
          <Eyebrow $line={30} $light>Get in touch</Eyebrow>
          <FTitle>Social links</FTitle>
          <FText>Taking seamless key performance indicators offline to maximise the long tail.</FText>
          <Socials>
            <Social><FaFacebookF /></Social>
            <Social><FaTwitter /></Social>
            <Social><FaPinterestP /></Social>
            <Social><FaLinkedinIn /></Social>
          </Socials>
        </FCol>
      </Footer>
      <Bar>
        <BarLink>Home</BarLink>
        <BarLink>About us</BarLink>
        <BarLink>Services</BarLink>
        <BarLink>Portfolio</BarLink>
        <BarLink>Blog</BarLink>
        <BarLink>Shop</BarLink>
        <BarLink $gap={33}><LuChevronUp size={12} />Back to top</BarLink>
      </Bar>
    </Page>
  );
}
